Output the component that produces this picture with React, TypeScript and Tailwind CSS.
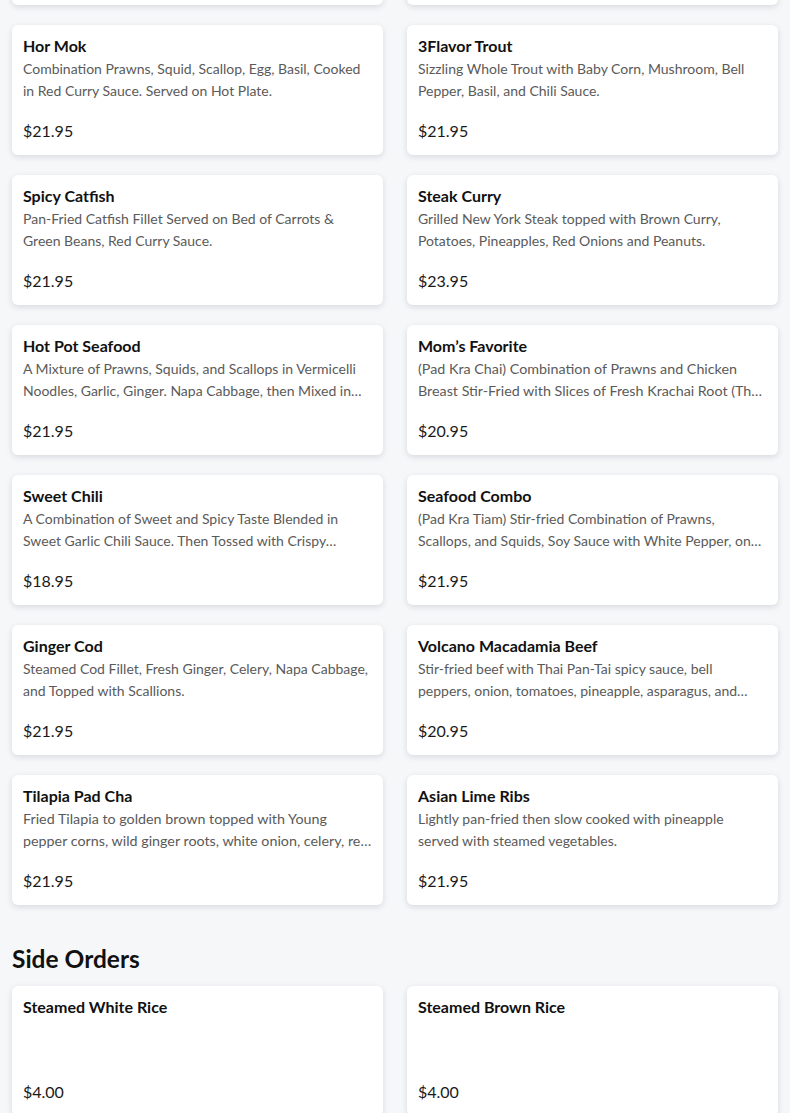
type Dish = {
  name: string;
  description?: string;
  price: string;
  // a few descriptions wrap a hair wider in the original
  wide?: string;
};

const mains: Dish[] = [
  {
    name: "Pla Rad Prik",
    description: "Crispy Fried Fish Fillet Topped with Sweet and Spicy Garlic Chili Sauce.",
    price: "$21.95",
  },
  {
    name: "Choo Chee Salmon",
    description: "Grilled Salmon Fillet Topped with Choo Chee Curry Sauce and Kaffir Lime Leaves.",
    price: "$22.95",
  },
  {
    name: "Hor Mok",
    description: "Combination Prawns, Squid, Scallop, Egg, Basil, Cooked in Red Curry Sauce. Served on Hot Plate.",
    price: "$21.95",
  },
  {
    name: "3Flavor Trout",
    description: "Sizzling Whole Trout with Baby Corn, Mushroom, Bell Pepper, Basil, and Chili Sauce.",
    price: "$21.95",
  },
  {
    name: "Spicy Catfish",
    description: "Pan-Fried Catfish Fillet Served on Bed of Carrots & Green Beans, Red Curry Sauce.",
    price: "$21.95",
  },
  {
    name: "Steak Curry",
    description: "Grilled New York Steak topped with Brown Curry, Potatoes, Pineapples, Red Onions and Peanuts.",
    price: "$23.95",
  },
  {
    name: "Hot Pot Seafood",
    description:
      "A Mixture of Prawns, Squids, and Scallops in Vermicelli Noodles, Garlic, Ginger. Napa Cabbage, then Mixed in Special Sauce.",
    price: "$21.95",
  },
  {
    name: "Mom\u2019s Favorite",
    description:
      "(Pad Kra Chai) Combination of Prawns and Chicken Breast Stir-Fried with Slices of Fresh Krachai Root (Thai Ginger) and Basil.",
    price: "$20.95",
    wide: "text-[14.3px]",
  },
  {
    name: "Sweet Chili",
    description:
      "A Combination of Sweet and Spicy Taste Blended in Sweet Garlic Chili Sauce. Then Tossed with Crispy Fish\u00a0Fillet.",
    price: "$18.95",
  },
  {
    name: "Seafood Combo",
    description:
      "(Pad Kra Tiam) Stir-fried Combination of Prawns, Scallops, and Squids, Soy Sauce with White Pepper, on Top of Steamed Vegetables.",
    price: "$21.95",
  },
  {
    name: "Ginger Cod",
    description: "Steamed Cod Fillet, Fresh Ginger, Celery, Napa Cabbage, and Topped with Scallions.",
    price: "$21.95",
  },
  {
    name: "Volcano Macadamia Beef",
    description:
      "Stir-fried beef with Thai Pan-Tai spicy sauce, bell peppers, onion, tomatoes, pineapple, asparagus, and macadamia nuts.",
    price: "$20.95",
  },
  {
    name: "Tilapia Pad Cha",
    description:
      "Fried Tilapia to golden brown topped with Young pepper corns, wild ginger roots, white onion, celery, red bell pepper and basil.",
    price: "$21.95",
    wide: "text-[14.3px]",
  },
  {
    name: "Asian Lime Ribs",
    description: "Lightly pan-fried then slow cooked with pineapple served with steamed vegetables.",
    price: "$21.95",
  },
];

const sides: Dish[] = [
  { name: "Steamed White Rice", price: "$4.00" },
  { name: "Steamed Brown Rice", price: "$4.00" },
];

const DishCard = ({ dish }: { dish: Dish }) => (
  <div className="flex h-[130px] flex-col rounded-md bg-white px-[11px] pt-[9px] pb-[12px] shadow-[0_2px_6px_rgba(15,23,42,0.13)]">
    <h3 className="text-[16px] leading-[24px] font-bold text-[#111]">{dish.name}</h3>
    {dish.description && (
      <p className={`line-clamp-2 leading-[22px] text-[#5a5a5a] ${dish.wide ?? "text-[14px]"}`}>
        {dish.description}
      </p>
    )}
    <p className="mt-auto text-[16px] leading-[24px] text-[#1a1a1a]">{dish.price}</p>
  </div>
);

const App = () => {
  return (
    <div className="min-h-screen overflow-hidden bg-[#f6f7f9] px-3 font-['Lato','Noto_Sans',sans-serif]">
      <div className="-mt-[125px] grid grid-cols-2 gap-x-6 gap-y-5">
        {mains.map((dish) => (
          <DishCard key={dish.name} dish={dish} />
        ))}
      </div>
      <h2 className="mt-[38px] mb-[11px] text-[24.5px] leading-[32px] font-bold text-[#111]">Side Orders</h2>
      <div className="grid grid-cols-2 gap-x-6 gap-y-5 pb-10">
        {sides.map((dish) => (
          <DishCard key={dish.name} dish={dish} />
        ))}
      </div>
    </div>
  );
};

export default App;
